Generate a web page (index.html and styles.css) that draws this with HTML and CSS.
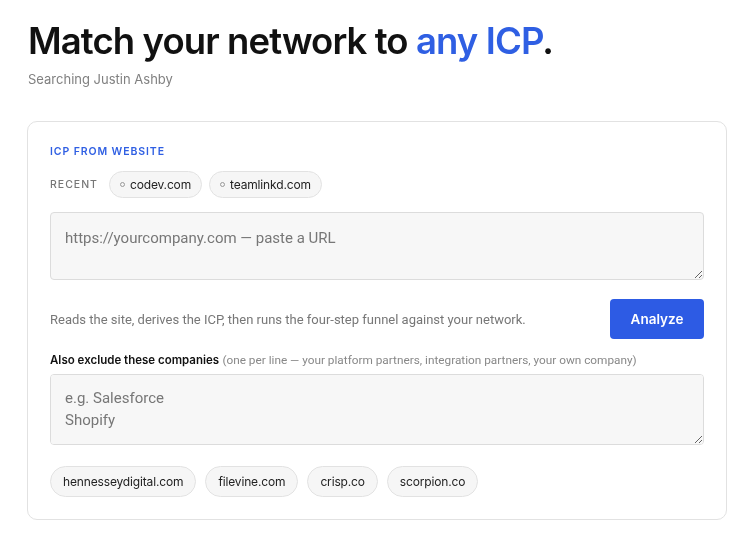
FILE: index.html
```html
<!DOCTYPE html>
<html lang="en">
<head>
    <meta charset="UTF-8">
    <meta name="viewport" content="width=device-width, initial-scale=1.0">
    <title>ICP Match</title>
    <link rel="stylesheet" href="styles.css">
</head>
<body>
    <header class="page-head">
        <h1>Match your network to <span class="accent">any ICP</span>.</h1>
        <p class="subtitle">Searching Justin Ashby</p>
    </header>

    <section class="card">
        <div class="eyebrow">ICP FROM WEBSITE</div>

        <div class="recent">
            <span class="recent-label">RECENT</span>
            <button class="chip"><span class="dot"></span>codev.com</button>
            <button class="chip"><span class="dot"></span>teamlinkd.com</button>
        </div>

        <textarea class="field url-field" placeholder="https://yourcompany.com — paste a URL"></textarea>

        <div class="action-row">
            <p class="hint">Reads the site, derives the ICP, then runs the four-step funnel against your network.</p>
            <button class="primary">Analyze</button>
        </div>

        <label class="field-label" for="exclude">
            <strong>Also exclude these companies</strong>
            <span>(one per line — your platform partners, integration partners, your own company)</span>
        </label>
        <textarea id="exclude" class="field exclude-field" placeholder="e.g. Salesforce&#10;Shopify"></textarea>

        <div class="chips">
            <button class="chip">hennesseydigital.com</button>
            <button class="chip">filevine.com</button>
            <button class="chip">crisp.co</button>
            <button class="chip">scorpion.co</button>
        </div>
    </section>
</body>
</html>
```

FILE: styles.css
```css
body {
    margin: 0;
    padding: 20px 23px 20px 27px;
    font-family: Inter, "Open Sans", sans-serif;
    color: #111;
    background: #fff;
}

.page-head { padding-left: 1px; }
h1 {
    margin: 0;
    font-size: 36.5px;
    font-weight: 600;
    letter-spacing: -0.9px;
    line-height: 42px;
    color: #111;
}
.accent { color: #2f5fe3; }
.subtitle {
    margin: 9px 0 0;
    font-size: 13px;
    color: #808080;
}

.card {
    margin-top: 34px;
    border: 1px solid #e2e2e2;
    border-radius: 10px;
    padding: 23px 22px 22px;
}

.eyebrow {
    font-size: 10.5px;
    font-weight: 600;
    letter-spacing: 0.9px;
    color: #2f5fe3;
}

.recent {
    display: flex;
    align-items: center;
    gap: 7px;
    margin-top: 13px;
}
.recent-label {
    font-size: 10.5px;
    font-weight: 500;
    letter-spacing: 1px;
    color: #777;
    margin-right: 4px;
}

.chip {
    display: inline-flex;
    align-items: center;
    gap: 5px;
    height: 27px;
    padding: 0 10px;
    border: 1px solid #e2e2e2;
    border-radius: 14px;
    background: #f6f6f6;
    font-family: Inter, "Open Sans", sans-serif;
    font-size: 12px;
    letter-spacing: -0.15px;
    color: #222;
}
.dot {
    width: 3px;
    height: 3px;
    border: 1px solid #999;
    border-radius: 50%;
}

.field {
    display: block;
    box-sizing: border-box;
    width: 100%;
    margin: 0;
    border: 1px solid #dcdcdc;
    border-radius: 4px;
    background: #f7f7f7;
    padding: 14px 14px;
    font-family: Roboto, "Liberation Sans", sans-serif;
    font-size: 15px;
    line-height: 22px;
    color: #222;
}
.field::placeholder { color: #777; }
.url-field { margin-top: 14px; height: 68px; }
.exclude-field { margin-top: 7px; height: 71px; padding-top: 12px; }

.action-row {
    display: flex;
    align-items: center;
    justify-content: space-between;
    margin-top: 19px;
}
.hint {
    margin: 0;
    font-family: Roboto, "Liberation Sans", sans-serif;
    font-size: 13px;
    color: #777;
}
.primary {
    width: 94px;
    height: 40px;
    border: none;
    border-radius: 4px;
    background: #2d5be4;
    color: #fff;
    font-family: Inter, "Open Sans", sans-serif;
    font-size: 13.5px;
    font-weight: 600;
}

.field-label {
    display: block;
    margin-top: 14px;
    font-size: 11.5px;
    color: #111;
}
.field-label strong { font-weight: 600; }
.field-label span {
    font-family: Roboto, "Liberation Sans", sans-serif;
    font-size: 11.8px;
    color: #888;
}

.chips {
    display: flex;
    gap: 9px;
    margin-top: 21px;
}
.chips .chip { height: 31px; padding: 0 12px; border-radius: 16px; }
```
